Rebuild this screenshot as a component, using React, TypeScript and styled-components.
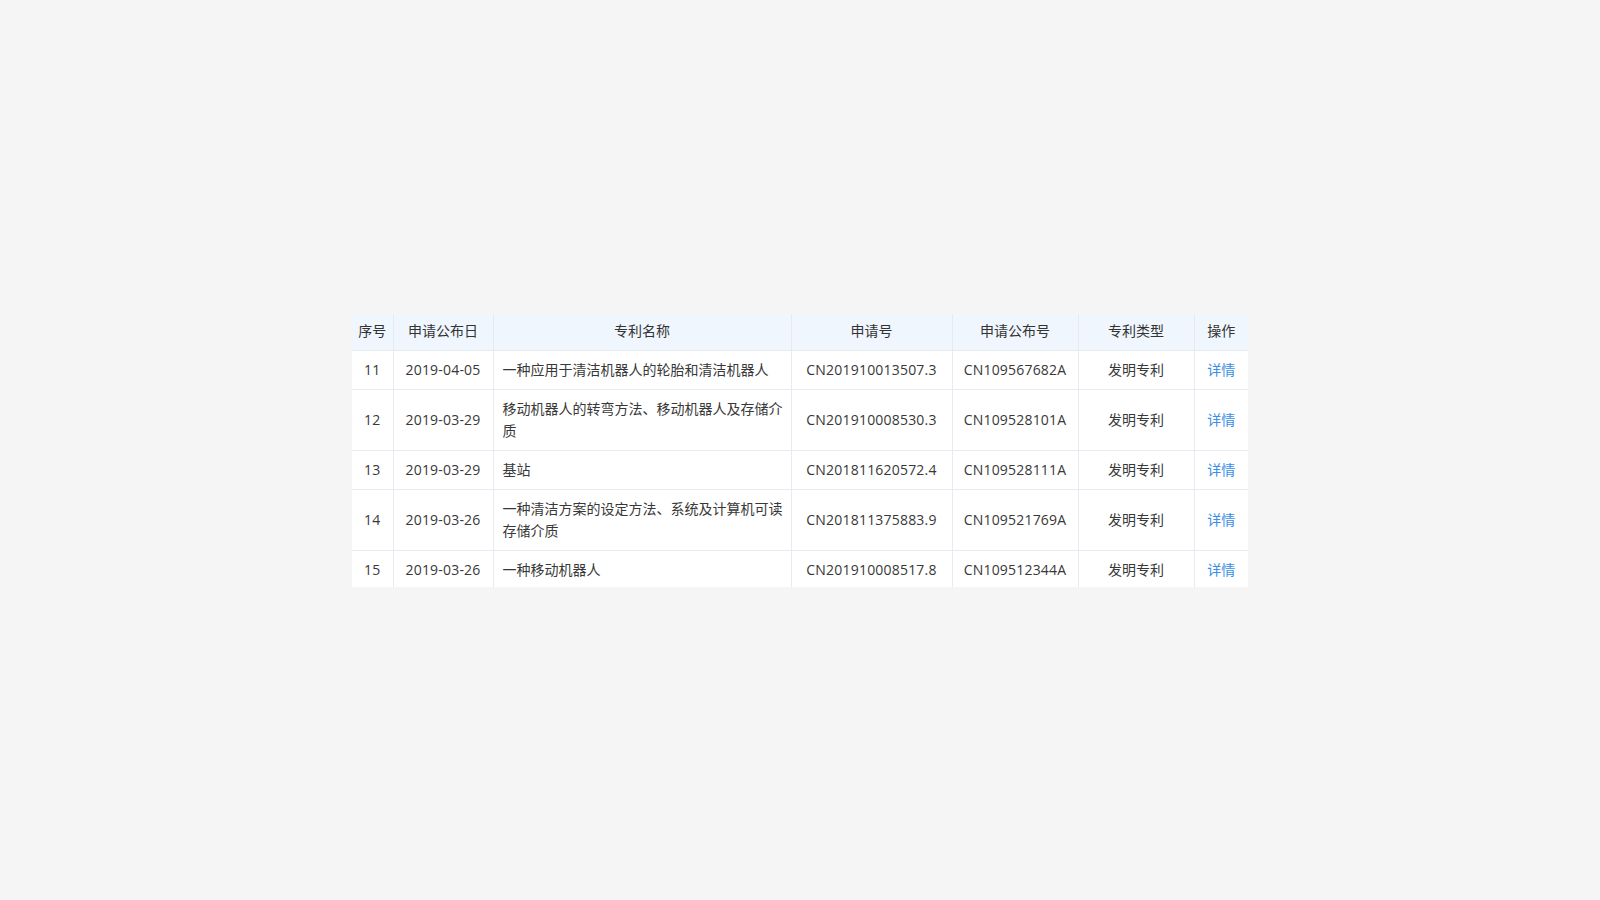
import React from "react";
import styled, { createGlobalStyle } from "styled-components";

const GlobalStyle = createGlobalStyle`
  html, body {
    margin: 0;
    padding: 0;
    background: #f5f5f5;
  }
  body {
    font-family: "Segoe UI", "Open Sans", "Microsoft YaHei", "Noto Sans CJK SC", sans-serif;
    color: #333;
  }
`;

const Page = styled.div`
  min-height: 100vh;
  display: flex;
  align-items: center;
  justify-content: center;
`;

const TableWrap = styled.div`
  width: 896px;
  height: 273px;
  overflow: hidden;
  background: #fff;
`;

const Table = styled.table`
  width: 896px;
  border-collapse: collapse;
  table-layout: fixed;
  font-size: 14px;
`;

const HeadCell = styled.th`
  height: 34px;
  padding: 0 2px 2px;
  background: #f0f6fd;
  font-weight: normal;
  color: #333;
  line-height: 22px;
  text-align: center;
  border-bottom: 1px solid #e6ebf1;
  border-left: 1px solid #e6ebf1;
  &:first-child {
    border-left: none;
  }
  white-space: nowrap;
`;

const Cell = styled.td<{ $align?: "left" | "center"; $num?: boolean }>`
  padding: ${(p) => (p.$align === "left" ? "8px 6px 8px 9px" : "8px 2px 8px")};
  line-height: 22px;
  color: #383838;
  letter-spacing: ${(p) => (p.$num ? "0.2px" : "0")};
  text-align: ${(p) => p.$align ?? "center"};
  vertical-align: middle;
  border-bottom: 1px solid #e6ebf1;
  border-left: 1px solid #e6ebf1;
  &:first-child {
    border-left: none;
  }
  word-break: break-all;
`;

const DetailLink = styled.a`
  color: #3a8ee6;
  text-decoration: none;
  cursor: pointer;
`;

type Row = {
  no: number;
  date: string;
  name: string;
  appNo: string;
  pubNo: string;
  type: string;
};

const rows: Row[] = [
  { no: 11, date: "2019-04-05", name: "一种应用于清洁机器人的轮胎和清洁机器人", appNo: "CN201910013507.3", pubNo: "CN109567682A", type: "发明专利" },
  { no: 12, date: "2019-03-29", name: "移动机器人的转弯方法、移动机器人及存储介质", appNo: "CN201910008530.3", pubNo: "CN109528101A", type: "发明专利" },
  { no: 13, date: "2019-03-29", name: "基站", appNo: "CN201811620572.4", pubNo: "CN109528111A", type: "发明专利" },
  { no: 14, date: "2019-03-26", name: "一种清洁方案的设定方法、系统及计算机可读存储介质", appNo: "CN201811375883.9", pubNo: "CN109521769A", type: "发明专利" },
  { no: 15, date: "2019-03-26", name: "一种移动机器人", appNo: "CN201910008517.8", pubNo: "CN109512344A", type: "发明专利" },
];

const widths = [41, 100, 298, 161, 126, 116, 54];
const headers = ["序号", "申请公布日", "专利名称", "申请号", "申请公布号", "专利类型", "操作"];

export default function App() {
  return (
    <>
      <GlobalStyle />
      <Page>
        <TableWrap>
          <Table>
            <colgroup>
              {widths.map((w, i) => (
                <col key={i} style={{ width: w }} />
              ))}
            </colgroup>
            <thead>
              <tr>
                {headers.map((h) => (
                  <HeadCell key={h}>{h}</HeadCell>
                ))}
              </tr>
            </thead>
            <tbody>
              {rows.map((r) => (
                <tr key={r.no}>
                  <Cell $num>{r.no}</Cell>
                  <Cell $num>{r.date}</Cell>
                  <Cell $align="left">{r.name}</Cell>
                  <Cell $num>{r.appNo}</Cell>
                  <Cell $num>{r.pubNo}</Cell>
                  <Cell>{r.type}</Cell>
                  <Cell>
                    <DetailLink>详情</DetailLink>
                  </Cell>
                </tr>
              ))}
            </tbody>
          </Table>
        </TableWrap>
      </Page>
    </>
  );
}
